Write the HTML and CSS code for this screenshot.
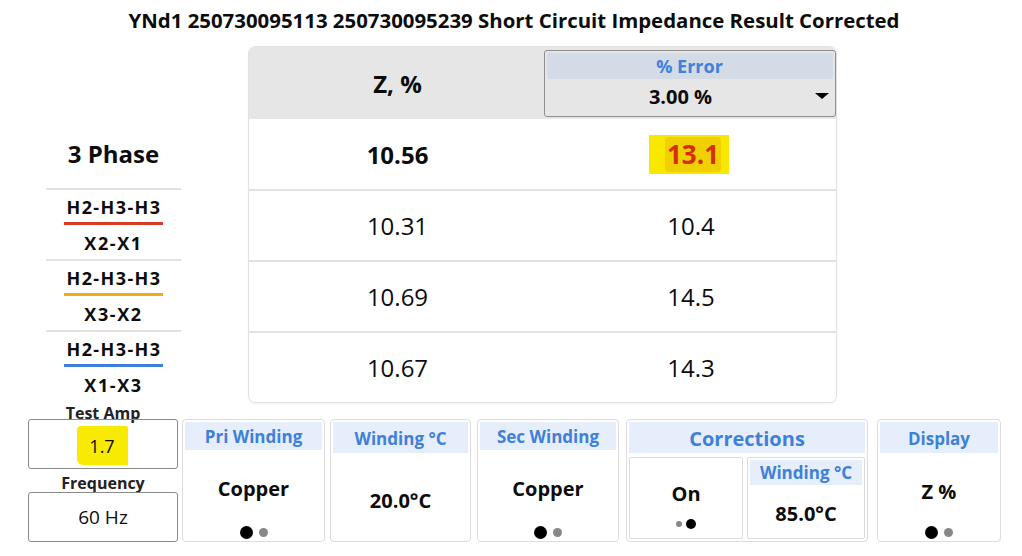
FILE: index.html
```html
<!DOCTYPE html>
<html>
<head>
<meta charset="utf-8">
<link rel="stylesheet" href="styles.css">
</head>
<body>
<div class="page">
  <h1 class="title">YNd1 250730095113 250730095239 Short Circuit Impedance Result Corrected</h1>
  <div class="main">
    <div class="labels">
      <div class="lbl-spacer"></div>
      <div class="lbl-row phase">3 Phase</div>
      <div class="lbl-row pair"><span class="lbl-top red">H2-H3-H3</span><span class="lbl-bot">X2-X1</span></div>
      <div class="lbl-row pair"><span class="lbl-top orange">H2-H3-H3</span><span class="lbl-bot">X3-X2</span></div>
      <div class="lbl-row pair last"><span class="lbl-top blue">H2-H3-H3</span><span class="lbl-bot">X1-X3</span></div>
    </div>
    <div class="card">
      <div class="row head">
        <div class="cell zh">Z, %</div>
        <div class="cell">
          <div class="select">
            <div class="select-label">% Error</div>
            <div class="select-value">3.00 %<span class="caret"></span></div>
          </div>
        </div>
      </div>
      <div class="row first">
        <div class="cell bold">10.56</div>
        <div class="cell"><span class="hl-outer"><span class="hl-inner">13.1</span></span></div>
      </div>
      <div class="row">
        <div class="cell">10.31</div>
        <div class="cell">10.4</div>
      </div>
      <div class="row">
        <div class="cell">10.69</div>
        <div class="cell">14.5</div>
      </div>
      <div class="row last">
        <div class="cell">10.67</div>
        <div class="cell">14.3</div>
      </div>
    </div>
  </div>
  <div class="bottom">
    <div class="inputs">
      <div class="in-label">Test Amp</div>
      <div class="in-box"><span class="amp-hl">1.7</span></div>
      <div class="in-label freq">Frequency</div>
      <div class="in-box">60 Hz</div>
    </div>
    <div class="panel w143">
      <div class="p-head">Pri Winding</div>
      <div class="p-body">
        <div class="p-value">Copper</div>
        <div class="dots"><span class="dot big on"></span><span class="dot small off"></span></div>
      </div>
    </div>
    <div class="panel w141">
      <div class="p-head tall">Winding °C</div>
      <div class="p-body center">
        <div class="p-value">20.0°C</div>
      </div>
    </div>
    <div class="panel w142">
      <div class="p-head">Sec Winding</div>
      <div class="p-body">
        <div class="p-value">Copper</div>
        <div class="dots"><span class="dot big on"></span><span class="dot small off"></span></div>
      </div>
    </div>
    <div class="panel corr">
      <div class="p-head big">Corrections</div>
      <div class="sub-row">
        <div class="sub">
          <div class="sub-value">On</div>
          <div class="dots tiny"><span class="dot xs off"></span><span class="dot sm on"></span></div>
        </div>
        <div class="sub">
          <div class="sub-head">Winding °C</div>
          <div class="sub-body">85.0°C</div>
        </div>
      </div>
    </div>
    <div class="panel disp">
      <div class="p-head tall">Display</div>
      <div class="p-body">
        <div class="p-value">Z %</div>
        <div class="dots short"><span class="dot big on"></span><span class="dot small off"></span></div>
      </div>
    </div>
  </div>
</div>
</body>
</html>
```

FILE: styles.css
```css
* { box-sizing: border-box; }
html, body { margin: 0; padding: 0; background: #fff; }
body {
  font-family: "Open Sans", "Noto Sans", sans-serif;
  color: #0c0c0c;
  width: 1022px;
  height: 556px;
  overflow: hidden;
}
.page { display: flex; flex-direction: column; }
.title {
  margin: 0;
  height: 46px;
  padding-top: 6px;
  text-align: center;
  font-size: 20.4px;
  font-weight: 700;
  line-height: 28px;
  padding-left: 6px;
}
.main { display: flex; align-items: flex-start; }
.labels {
  margin-left: 46px;
  width: 135px;
  display: flex;
  flex-direction: column;
}
.lbl-spacer { height: 72px; }
.lbl-row {
  display: flex;
  flex-direction: column;
  align-items: center;
  justify-content: center;
  font-weight: 700;
  border-bottom: 2px solid #e2e2e2;
}
.lbl-row.phase { height: 72px; font-size: 24px; }
.lbl-row.pair { height: 71px; font-size: 18px; justify-content: flex-start; padding-top: 5px; }
.lbl-row.last { border-bottom: none; }
.lbl-top {
  padding: 0 2px 3px 3px;
  line-height: 24px;
  border-bottom: 3px solid;
  letter-spacing: 1.4px;
}
.lbl-top.red { border-color: #d93a25; }
.lbl-top.orange { border-color: #f2aa1c; }
.lbl-top.blue { border-color: #3d7fd9; }
.lbl-bot { line-height: 32px; padding-top: 2px; letter-spacing: 1.6px; }

.card {
  margin-left: 67px;
  width: 589px;
  height: 357px;
  border: 1px solid #e2e2e2;
  border-radius: 7px;
  overflow: hidden;
  display: flex;
  flex-direction: column;
  box-shadow: 0 1px 2px rgba(0,0,0,0.06);
}
.row {
  display: grid;
  grid-template-columns: 297px 1fr;
  height: 71px;
  border-bottom: 2px solid #e2e2e2;
  font-size: 24px;
}
.row.head { height: 72px; background: #e6e6e6; border-bottom: none; }
.row.first { height: 72px; }
.row.last { border-bottom: none; flex: 1; }
.cell {
  display: flex;
  align-items: center;
  justify-content: center;
}
.cell.bold, .cell.zh { font-weight: 700; }
.zh { font-size: 24px; padding-top: 0; }
.select {
  width: 292px;
  height: 67px;
  margin-left: -3px;
  border: 1px solid #8e8e8e;
  border-radius: 3px;
  padding: 2px;
  display: flex;
  flex-direction: column;
}
.select-label {
  height: 26px;
  background: #d3dbe6;
  border-radius: 2px;
  color: #3f80d8;
  font-weight: 700;
  font-size: 18px;
  display: flex;
  align-items: center;
  justify-content: center;
}
.select-value {
  flex: 1;
  display: flex;
  align-items: center;
  justify-content: center;
  font-weight: 700;
  font-size: 20px;
  position: relative;
  padding-right: 18px;
}
.caret {
  position: absolute;
  right: 4px;
  top: 14px;
  width: 0;
  height: 0;
  border-left: 7px solid transparent;
  border-right: 7px solid transparent;
  border-top: 6px solid #000;
}
.hl-outer {
  background: #f8e800;
  padding: 2px 8px 2px 16px;
  display: inline-flex;
  margin-left: -4px;
}
.hl-inner {
  background: #f0d000;
  border-radius: 4px;
  color: #d42d10;
  font-weight: 700;
  font-size: 26px;
  padding: 0 2px;
  line-height: 35px;
}

.bottom {
  display: flex;
  align-items: flex-start;
  margin-top: 2px;
  padding-left: 28px;
}
.inputs { width: 150px; display: flex; flex-direction: column; margin-right: 4px; }
.in-label {
  height: 14px;
  line-height: 16px;
  text-align: center;
  font-weight: 700;
  font-size: 16px;
  color: #222;
}
.in-label.freq { height: 23px; line-height: 28px; }
.in-box {
  height: 50px;
  border: 1px solid #8a8a8a;
  border-radius: 3px;
  display: flex;
  align-items: center;
  justify-content: center;
  font-size: 19px;
}
.amp-hl {
  background: #f8ea00;
  width: 51px;
  height: 39px;
  display: flex;
  align-items: center;
  justify-content: center;
  border-radius: 4px 2px 0 6px;
  margin-left: -2px;
  margin-top: 3px;
  font-size: 18px;
}
.panel {
  margin-top: 14px;
  height: 123px;
  border: 1px solid #dcdcdc;
  border-radius: 4px;
  padding: 2px;
  display: flex;
  flex-direction: column;
  margin-right: 5px;
}
.w143 { width: 143px; }
.w141 { width: 141px; margin-right: 6px; }
.w142 { width: 142px; margin-right: 7px; }
.corr { width: 242px; margin-right: 9px; }
.disp { width: 124px; }
.p-head {
  height: 28px;
  background: #e5eefa;
  color: #3f80d8;
  font-weight: 700;
  font-size: 17px;
  display: flex;
  align-items: center;
  justify-content: center;
  flex-shrink: 0;
}
.p-head.tall { height: 31px; padding-top: 2px; }
.p-head.big { height: 31px; font-size: 20px; padding-top: 1px; }
.p-body {
  flex: 1;
  display: flex;
  flex-direction: column;
  align-items: center;
  padding-top: 26px;
}
.p-body.center { padding-top: 35px; }
.p-value { font-weight: 700; font-size: 20px; line-height: 26px; }
.dots { display: flex; align-items: center; gap: 6px; margin-top: 24px; }
.dots.short { margin-top: 21px; }
.dot { border-radius: 50%; display: block; }
.dot.on { background: #000; }
.dot.off { background: #888; }
.dot.big { width: 13px; height: 13px; }
.dot.small { width: 9px; height: 9px; }
.dot.sm { width: 10px; height: 10px; }
.dot.xs { width: 6px; height: 6px; }
.dots.tiny { gap: 4px; margin-top: 13px; }
.sub-row { flex: 1; display: flex; gap: 4px; margin-top: 4px; }
.sub {
  flex: 1;
  border: 1px solid #dcdcdc;
  border-radius: 2px;
  display: flex;
  flex-direction: column;
  align-items: center;
}
.sub:first-child { justify-content: center; padding-top: 14px; }
.sub-value { font-weight: 700; font-size: 20px; line-height: 24px; }
.sub:last-child { padding: 2px; align-items: stretch; }
.sub-head {
  height: 25px;
  background: #e5eefa;
  color: #3f80d8;
  font-weight: 700;
  font-size: 17px;
  display: flex;
  align-items: center;
  justify-content: center;
}
.sub-body {
  flex: 1;
  display: flex;
  align-items: center;
  justify-content: center;
  font-weight: 700;
  font-size: 20px;
  padding-top: 6px;
}
```
